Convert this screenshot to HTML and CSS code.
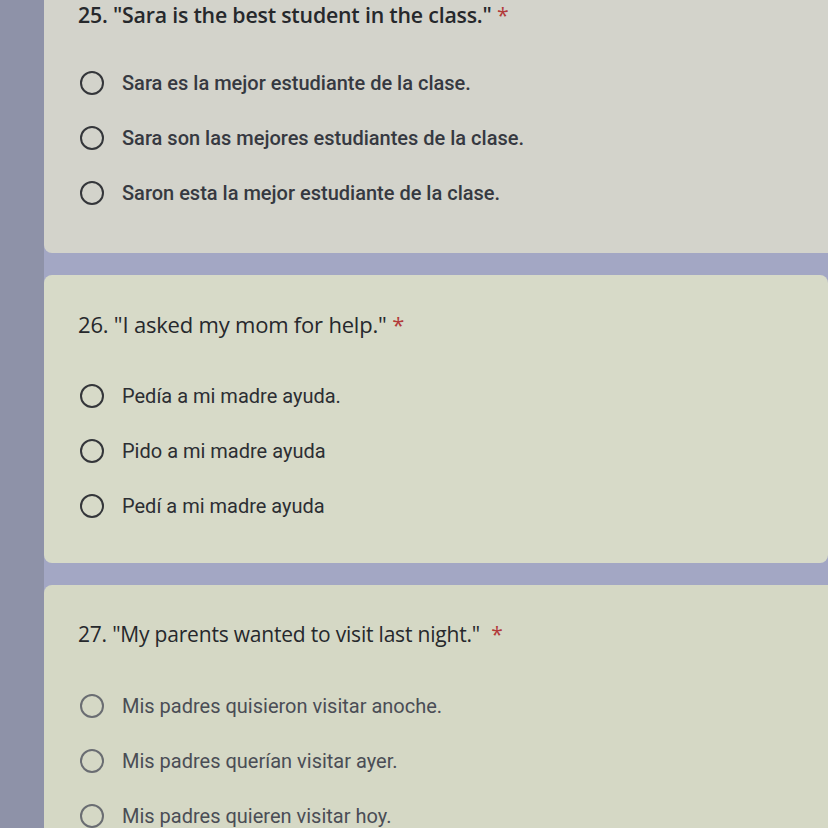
FILE: index.html
```html
<!DOCTYPE html>
<html lang="es">
<head>
<meta charset="utf-8">
<link rel="stylesheet" href="styles.css">
</head>
<body>
<main class="page">
  <section class="card card-first">
    <h2 class="title title-bold">25. "Sara is the best student in the class." <span class="req">*</span></h2>
    <div class="options">
      <label class="opt opt-bold"><span class="radio"></span><span>Sara es la mejor estudiante de la clase.</span></label>
      <label class="opt opt-bold"><span class="radio"></span><span>Sara son las mejores estudiantes de la clase.</span></label>
      <label class="opt opt-bold"><span class="radio"></span><span>Saron esta la mejor estudiante de la clase.</span></label>
    </div>
  </section>
  <section class="card card-second">
    <h2 class="title title-wide">26. "I asked my mom for help." <span class="req">*</span></h2>
    <div class="options">
      <label class="opt"><span class="radio"></span><span>Pedía a mi madre ayuda.</span></label>
      <label class="opt"><span class="radio"></span><span>Pido a mi madre ayuda</span></label>
      <label class="opt"><span class="radio"></span><span>Pedí a mi madre ayuda</span></label>
    </div>
  </section>
  <section class="card card-third">
    <h2 class="title">27. "My parents wanted to visit last night." <span class="req req-far">*</span></h2>
    <div class="options">
      <label class="opt opt-light"><span class="radio"></span><span>Mis padres quisieron visitar anoche.</span></label>
      <label class="opt opt-light"><span class="radio"></span><span>Mis padres querían visitar ayer.</span></label>
      <label class="opt opt-light"><span class="radio"></span><span>Mis padres quieren visitar hoy.</span></label>
    </div>
  </section>
</main>
</body>
</html>
```

FILE: styles.css
```css
* { box-sizing: border-box; }
html, body { margin: 0; padding: 0; }
body {
  width: 828px;
  height: 828px;
  overflow: hidden;
  background: #9a9eb8;
  font-family: Roboto, "Liberation Sans", sans-serif;
}
.page {
  display: flex;
  flex-direction: column;
  gap: 22px;
  padding-left: 44px;
  background: linear-gradient(90deg, #8e92a8 0, #8e92a8 44px, #a3a7c4 44px);
}
.card {
  border-radius: 8px;
  padding: 35px 0 30px 34px;
}
.card-first {
  background: #d3d3cb;
  border-radius: 0 0 0 8px;
  padding-top: 0;
  padding-bottom: 32px;
  height: 253px;
}
.card-first .title { margin-top: 1px; }
.card-first .options { margin-top: 26px; }
.card-second {
  background: #d7dac8;
  height: 288px;
}
.card-third {
  background: #d5d8c5;
  border-radius: 8px 0 0 0;
  height: 260px;
}
.title {
  margin: 0;
  height: 28px;
  line-height: 28px;
  font-family: "Open Sans", "Liberation Sans", sans-serif;
  font-size: 21px;
  font-weight: 400;
  color: #26282c;
  letter-spacing: -0.2px;
}
.title-bold { font-weight: 600; font-size: 21.3px; }
.title-wide { font-size: 22px; }
.req { color: #b23a3a; font-weight: 400; }
.req-far { margin-left: 6px; }
.options {
  margin-top: 30px;
  display: flex;
  flex-direction: column;
}
.opt {
  height: 55px;
  display: flex;
  align-items: center;
  gap: 18px;
  font-size: 20px;
  color: #2c2e33;
}
.opt-bold { font-weight: 500; color: #363941; }
.opt-light { color: #4a4d55; }
.radio {
  width: 24px;
  height: 24px;
  margin-left: 2px;
  border: 2.5px solid #34363a;
  border-radius: 50%;
  flex: none;
}
.opt-light .radio { border-color: #6a6d72; }
```
